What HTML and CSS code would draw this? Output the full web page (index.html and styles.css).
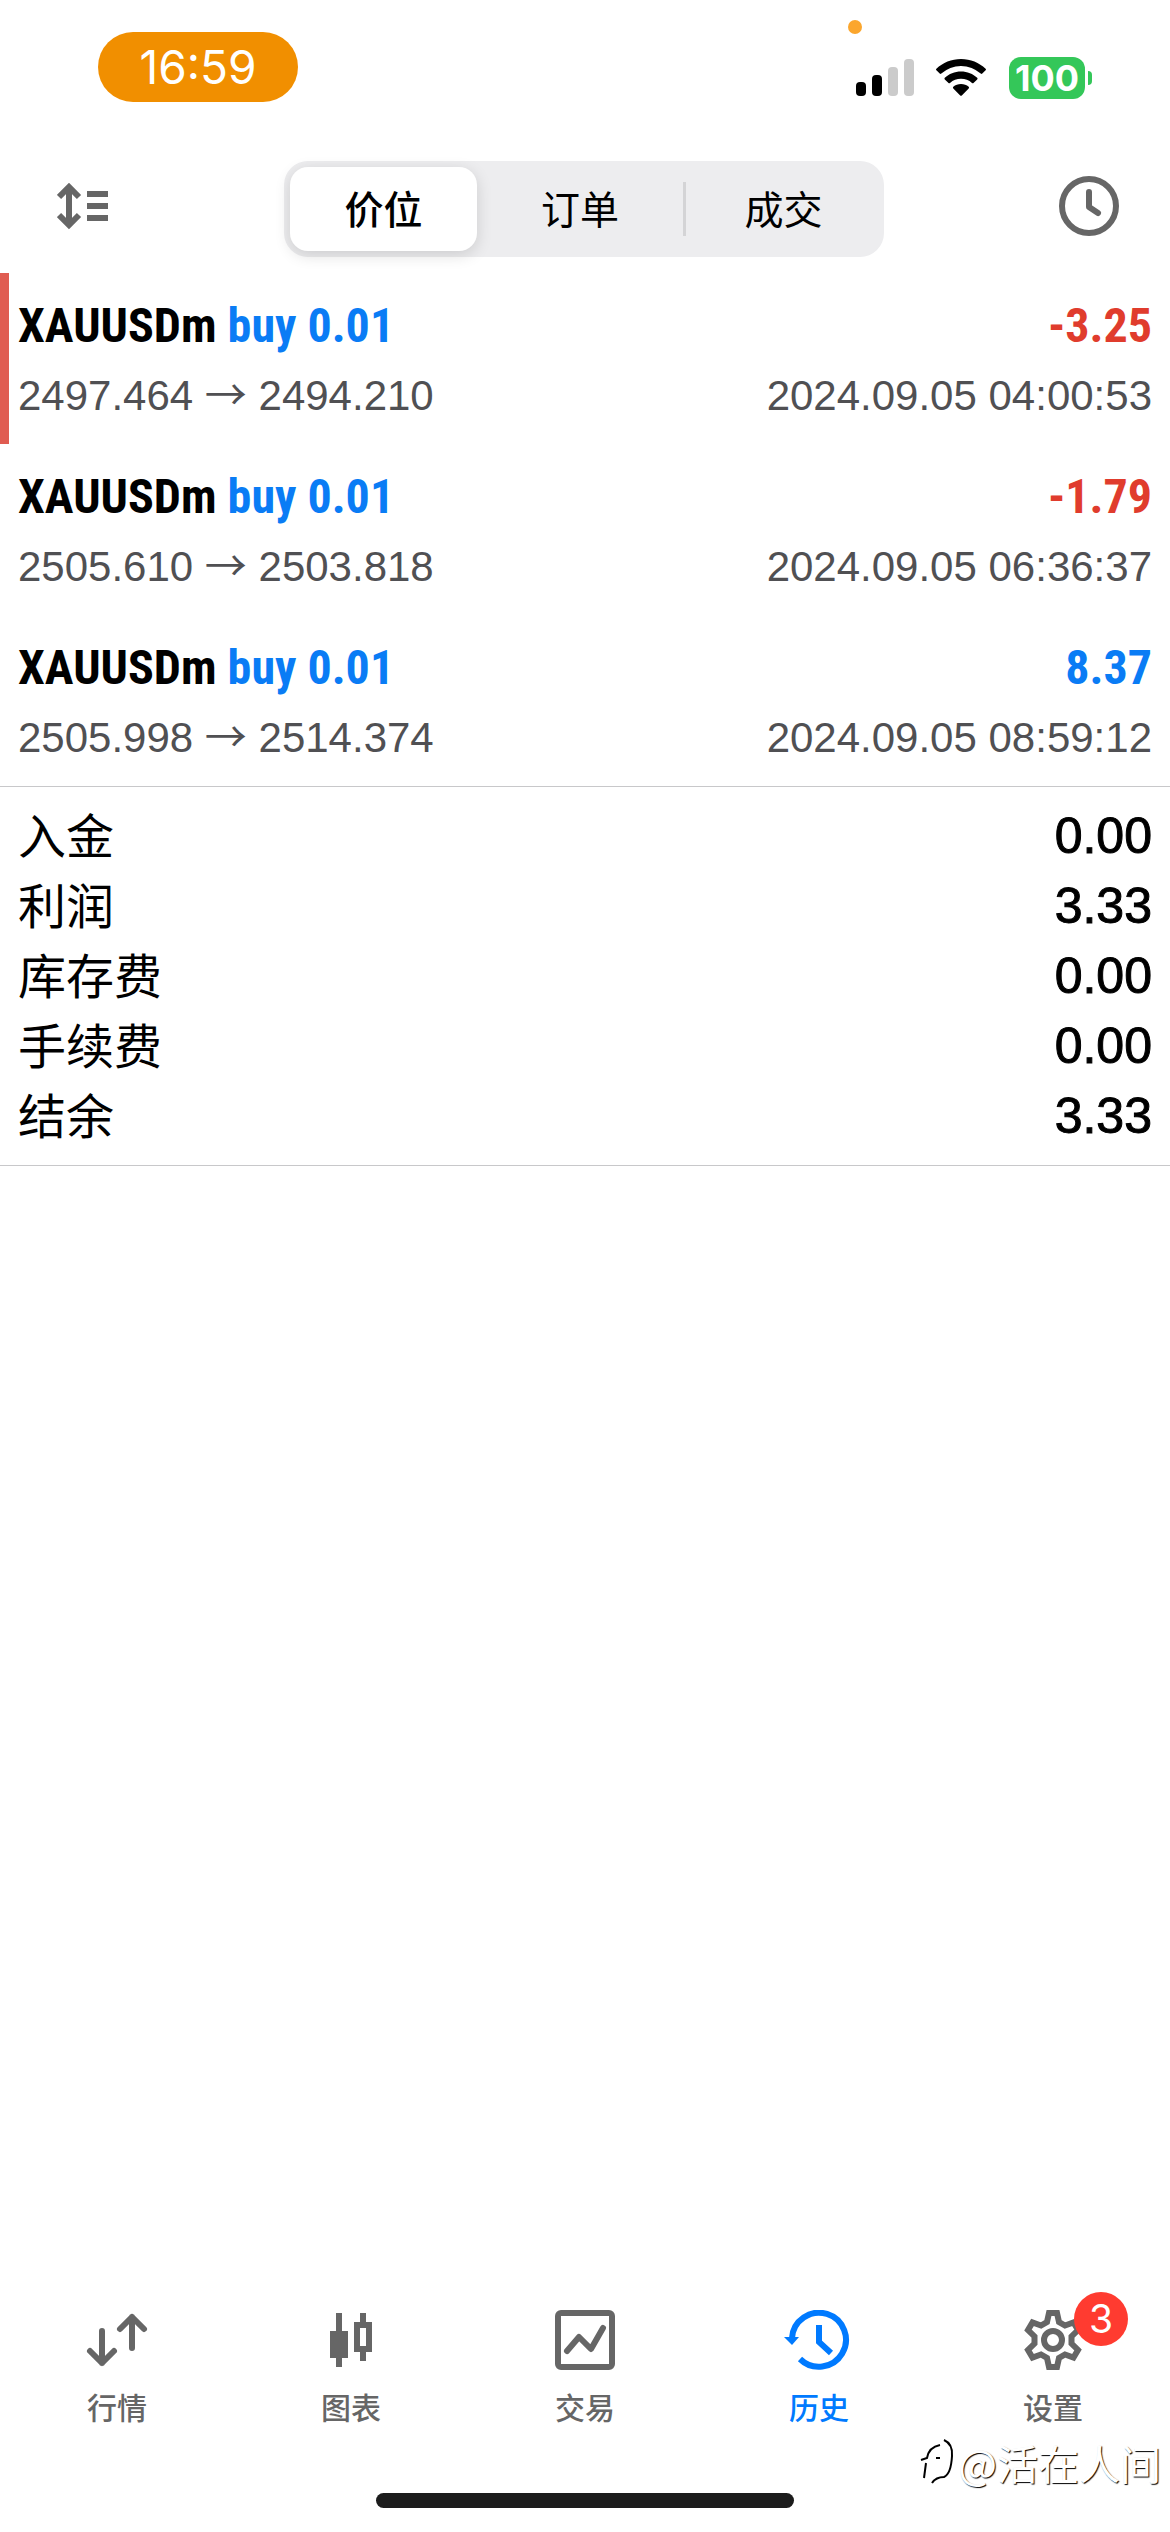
FILE: index.html
```html
<!DOCTYPE html>
<html lang="zh-CN">
<head>
<meta charset="utf-8">
<meta name="viewport" content="width=device-width, initial-scale=1">
<title>历史</title>
<link rel="stylesheet" href="styles.css">
</head>
<body>
<div class="app">
  <header class="status">
    <span class="status-time">16:59</span>
    <span class="status-dot"></span>
    <div class="status-icons">
      <svg class="signal" width="58" height="38" viewBox="0 0 58 38" aria-hidden="true">
        <rect x="0" y="23" width="10" height="14" rx="4"/>
        <rect x="16" y="16" width="10" height="21" rx="4"/>
        <rect x="32" y="8" width="10" height="29" rx="4" fill="#cbcbcb"/>
        <rect x="48" y="0" width="10" height="37" rx="4" fill="#cbcbcb"/>
      </svg>
      <svg class="wifi" width="50" height="38" viewBox="0 0 50 38" aria-hidden="true">
        <path d="M25 0C34.500 0 43.200 3.700 49.600 9.700Q50.400 10.500 49.600 11.300L46.300 14.600Q45.500 15.300 44.700 14.600A29 29 0 0 0 5.300 14.600Q4.500 15.300 3.700 14.600L.4 11.300Q-.4 10.500 .4 9.700C6.800 3.700 15.500 0 25 0Z"/>
        <path d="M25 12.500C31.300 12.500 37 14.900 41.200 18.800Q42 19.600 41.200 20.400L37.500 24Q36.800 24.700 36 24A16.500 16.500 0 0 0 14 24Q13.200 24.700 12.500 24L8.800 20.400Q8 19.600 8.800 18.800C13 14.900 18.700 12.500 25 12.500Z"/>
        <path d="M25 25C28 25 30.600 26 32.700 27.800Q33.500 28.600 32.700 29.400L25.800 36.400Q25 37.200 24.200 36.400L17.300 29.400Q16.500 28.600 17.300 27.800C19.400 26 22 25 25 25Z"/>
      </svg>
      <span class="battery">100</span>
      <span class="battery-cap"></span>
    </div>
  </header>

  <div class="toolbar">
    <button class="icon-button" aria-label="排序">
      <svg width="52" height="48" viewBox="0 0 52 48" fill="none" stroke="#666" stroke-width="6" aria-hidden="true">
        <path d="M12 5V43M2 15L12 5L22 15M2 33L12 43L22 33M30 12H51M30 24H51M30 36H51"/>
      </svg>
    </button>
    <div class="segments">
      <button class="segment segment-active">价位</button>
      <button class="segment">订单</button>
      <button class="segment segment-split">成交</button>
    </div>
    <button class="icon-button" aria-label="时间">
      <svg width="60" height="60" viewBox="0 0 60 60" fill="none" stroke="#666" stroke-width="6" stroke-linecap="round" stroke-linejoin="round" aria-hidden="true">
        <circle cx="30" cy="30" r="27"/><path d="M30 16V31L39 37"/>
      </svg>
    </button>
  </div>

  <main>
    <ul class="deals">
      <li class="deal deal-marked">
        <div class="deal-row deal-head"><span>XAUUSDm <span class="buy">buy 0.01</span></span><span class="loss">-3.25</span></div>
        <div class="deal-row deal-info"><span>2497.464 <span class="arrow">→</span> 2494.210</span><time>2024.09.05 04:00:53</time></div>
      </li>
      <li class="deal">
        <div class="deal-row deal-head"><span>XAUUSDm <span class="buy">buy 0.01</span></span><span class="loss">-1.79</span></div>
        <div class="deal-row deal-info"><span>2505.610 <span class="arrow">→</span> 2503.818</span><time>2024.09.05 06:36:37</time></div>
      </li>
      <li class="deal">
        <div class="deal-row deal-head"><span>XAUUSDm <span class="buy">buy 0.01</span></span><span class="buy">8.37</span></div>
        <div class="deal-row deal-info"><span>2505.998 <span class="arrow">→</span> 2514.374</span><time>2024.09.05 08:59:12</time></div>
      </li>
    </ul>
    <dl class="summary">
      <div class="summary-row"><dt>入金</dt><dd>0.00</dd></div>
      <div class="summary-row"><dt>利润</dt><dd>3.33</dd></div>
      <div class="summary-row"><dt>库存费</dt><dd>0.00</dd></div>
      <div class="summary-row"><dt>手续费</dt><dd>0.00</dd></div>
      <div class="summary-row"><dt>结余</dt><dd>3.33</dd></div>
    </dl>
  </main>

  <nav class="tabs">
    <a class="tab" href="#quotes">
      <svg width="66" height="60" viewBox="0 0 66 60" fill="none" stroke="#666" stroke-width="6" stroke-linecap="round" stroke-linejoin="round" aria-hidden="true">
        <path d="M18 21V53M6 41L18 53L30 41M48 38V7M36 19L48 7L60 19"/>
      </svg>
      <span>行情</span>
    </a>
    <a class="tab" href="#charts">
      <svg width="60" height="60" viewBox="0 0 60 60" fill="#666" aria-hidden="true">
        <path d="M15 3H21V21H27V48H21V57H15V48H9V21H15Z"/>
        <path fill-rule="evenodd" d="M39 3H45V12H51V42H45V51H39V42H33V12H39ZM39 18V36H45V18Z"/>
      </svg>
      <span>图表</span>
    </a>
    <a class="tab" href="#trade">
      <svg width="60" height="60" viewBox="0 0 60 60" fill="none" stroke="#666" stroke-width="6" stroke-linecap="round" stroke-linejoin="round" aria-hidden="true">
        <rect x="3" y="3" width="54" height="54" rx="3"/><path d="M12 41L24 27L36 39L48 18"/>
      </svg>
      <span>交易</span>
    </a>
    <a class="tab tab-active" href="#history" aria-current="page">
      <svg width="72" height="60" viewBox="0 0 72 60" fill="none" stroke="#007aff" stroke-width="6" aria-hidden="true">
        <path d="M9 28A27 27 0 1 1 17 49"/><path d="M36 15V32L48 43"/><path d="M1 27H16L9 35Z" fill="#007aff" stroke="none"/>
      </svg>
      <span>历史</span>
    </a>
    <a class="tab" href="#settings">
      <span class="tab-icon">
        <svg width="60" height="60" viewBox="0 0 60 60" fill="none" stroke="#666" stroke-width="6" aria-hidden="true">
          <path d="M26 3H34L36 12L42 15.500L50.500 12.500L55 20L48.500 26.500V33.500L55 40L50.500 47.500L42 44.500L36 48L34 57H26L24 48L18 44.500L9.500 47.500L5 40L11.500 33.500V26.500L5 20L9.500 12.500L18 15.500L24 12Z"/>
          <circle cx="30" cy="30" r="9"/>
        </svg>
        <span class="badge">3</span>
      </span>
      <span>设置</span>
    </a>
  </nav>
  <div class="home-bar"></div>
  <div class="watermark">
    <svg width="40" height="48" viewBox="0 0 40 48" fill="none" stroke="#000" stroke-width="2" aria-hidden="true">
      <path d="M6 40L8 25M3 22L9 20Q11 9 22 7M18 20H22M26 2Q35 6 34 18Q33 36 26 39Q18 39 14 45"/>
    </svg>
    <span>@活在人间</span>
  </div>
</div>
</body>
</html>
```

FILE: styles.css
```css
* { box-sizing: border-box; }
body {
  margin: 0;
  background: #fff;
  color: #000;
  font-family: "Liberation Sans", "Noto Sans CJK SC", sans-serif;
}
button { border: 0; padding: 0; background: none; color: inherit; font: inherit; }
svg { display: block; }
.app { position: relative; min-height: 100vh; display: flex; flex-direction: column; }

.status {
  position: relative;
  height: 161px;
  padding: 32px 78px 0 98px;
  display: flex;
  justify-content: space-between;
  align-items: flex-start;
}
.status-time {
  width: 200px;
  border-radius: 35px;
  background: #f18f00;
  color: #fff;
  font-family: Inter, sans-serif;
  font-size: 46px;
  line-height: 70px;
  text-align: center;
}
.status-dot { position: absolute; top: 20px; right: 308px; width: 14px; height: 14px; border-radius: 50%; background: #fba62d; }
.status-icons { display: flex; align-items: center; padding-top: 25px; }
.wifi { margin: 0 23px 0 22px; }
.battery {
  width: 76px;
  border-radius: 12px;
  background: #34c759;
  color: #fff;
  font: 700 36px/42px Inter, sans-serif;
  text-align: center;
}
.battery-cap { width: 4px; height: 14px; margin-left: 3px; border-radius: 0 4px 4px 0; background: #34c759; }

.toolbar { display: flex; justify-content: space-between; align-items: center; padding: 0 51px 0 57px; }
.icon-button { padding-bottom: 6px; }
.segments {
  width: 600px;
  height: 96px;
  padding: 6px 0 6px 6px;
  display: grid;
  grid-template-columns: 187px 206px 1fr;
  border-radius: 24px;
  background: #ededef;
}
.segment { position: relative; padding-bottom: 4px; font-family: "Noto Sans CJK SC", sans-serif; font-size: 39px; line-height: 80px; }
.segment-active { border-radius: 18px; background: #fff; font-weight: 500; box-shadow: 0 4px 16px rgba(0, 0, 0, .14); }
.segment-split::before { content: ""; position: absolute; left: 0; top: 15px; width: 3px; height: 54px; background: #d4d4d6; }

.deals { margin: 16px 0 0; padding: 0; list-style: none; }
.deal { height: 171px; padding: 20px 18px 0; }
.deal-marked { box-shadow: inset 9px 0 #e05c51; }
.deal-row { display: flex; justify-content: space-between; }
.deal-head { font-family: "Roboto Condensed", Roboto, sans-serif; font-size: 48px; font-weight: 700; line-height: 66px; }
.deal-info { color: #505053; font-size: 42px; line-height: 74px; }
.arrow { font-family: "Noto Sans CJK SC", sans-serif; line-height: 1; }
.buy { color: #0a7cf5; }
.loss { color: #e03c2d; }

.summary { margin: 0; padding: 14px 18px; border-top: 1px solid #c8c8ca; border-bottom: 1px solid #c8c8ca; }
.summary-row { display: flex; justify-content: space-between; height: 70px; }
dt { font-family: "Noto Sans CJK SC", sans-serif; font-size: 48px; line-height: 64px; }
dd { margin: 0; font-size: 50px; line-height: 70px; -webkit-text-stroke: 1px #000; }

.tabs { display: grid; grid-template-columns: repeat(5, 1fr); margin-top: auto; }
.tab {
  display: flex;
  flex-direction: column;
  align-items: center;
  gap: 16px;
  color: #666;
  font: 500 30px/40px "Noto Sans CJK SC", sans-serif;
  text-decoration: none;
}
.tab-active { color: #007aff; }
.tab-icon { position: relative; }
.badge {
  position: absolute;
  left: 51px;
  top: -18px;
  width: 54px;
  border-radius: 50%;
  background: #ff3b30;
  color: #fff;
  font: 39px/54px Inter, sans-serif;
  text-align: center;
}
.home-bar { width: 418px; height: 15px; margin: 67px auto 24px; border-radius: 8px; background: #1c1c1c; }
.watermark {
  position: absolute;
  right: 9px;
  bottom: 42px;
  display: flex;
  align-items: center;
  color: #fff;
  font: 41px/56px "Noto Sans CJK SC", sans-serif;
  text-shadow: 1px 1px 1px #000;
}
```
